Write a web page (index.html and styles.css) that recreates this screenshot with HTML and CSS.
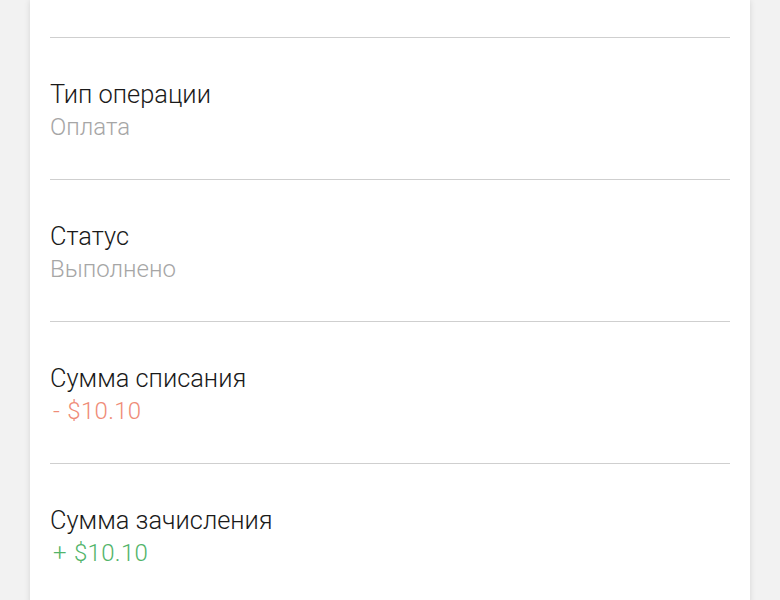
FILE: index.html
```html
<!DOCTYPE html>
<html lang="ru">
<head>
<meta charset="utf-8">
<link rel="stylesheet" href="styles.css">
</head>
<body>
<div class="card">
  <div class="row row-top"></div>
  <div class="row">
    <div class="label">Тип операции</div>
    <div class="value">Оплата</div>
  </div>
  <div class="row">
    <div class="label">Статус</div>
    <div class="value">Выполнено</div>
  </div>
  <div class="row">
    <div class="label">Сумма списания</div>
    <div class="value minus">- $10.10</div>
  </div>
  <div class="row">
    <div class="label">Сумма зачисления</div>
    <div class="value plus">+ $10.10</div>
  </div>
</div>
</body>
</html>
```
FILE: styles.css
```css
html, body {
  margin: 0;
  padding: 0;
  background: #f2f2f2;
  height: 600px;
  overflow: hidden;
}
body {
  font-family: Roboto, "Noto Sans", sans-serif;
  font-weight: 300;
}
.card {
  width: 720px;
  margin: 0 30px;
  background: #ffffff;
  box-shadow: 0 0 6px rgba(0, 0, 0, 0.12);
  padding: 0 20px;
  box-sizing: border-box;
  min-height: 600px;
}
.row {
  padding: 40px 0 36px;
  border-bottom: 1.5px solid #cfcfcf;
}
.row-top {
  padding: 0;
  height: 37px;
}
.label {
  font-size: 25.4px;
  line-height: 32px;
  color: #1a1a1a;
}
.value {
  font-size: 24px;
  line-height: 32px;
  margin-top: 1px;
  color: #a6a6a6;
}
.value.minus {
  color: #ef8c78;
  padding-left: 3px;
  word-spacing: 1px;
  letter-spacing: 0.3px;
}
.value.plus {
  color: #52b46a;
  padding-left: 3px;
  word-spacing: 1px;
  letter-spacing: 0.3px;
}
```
